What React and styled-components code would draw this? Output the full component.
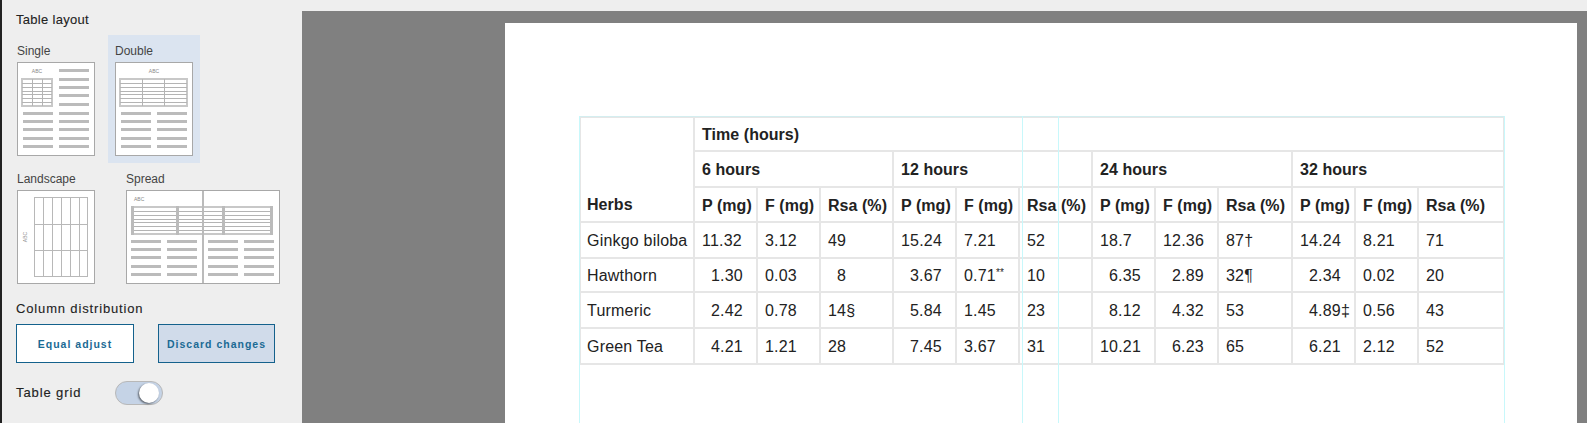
import React from "react";
import styled, { createGlobalStyle } from "styled-components";

const GlobalStyle = createGlobalStyle`
  html, body { margin: 0; padding: 0; background: #eeeeee; }
  * { box-sizing: border-box; }
`;

const Shell = styled.div`
  display: flex;
  height: 423px;
  overflow: hidden;
  font-family: "Liberation Sans", Arial, sans-serif;
`;

const Sidebar = styled.aside`
  flex: 0 0 302px;
  padding: 12px 0 0 8px;
  background: #eeeeee;
  border-left: 2px solid #222222;
`;

const Heading = styled.h3`
  margin: 0 0 0 6px;
  font-size: 13px;
  line-height: 16px;
  font-weight: 400;
  letter-spacing: ${(p) => p.$spacing}px;
  color: #222222;
  -webkit-text-stroke: 0.1px #222222;
`;

const LayoutRow = styled.div`
  display: flex;
  gap: ${(p) => p.$gap}px;
`;

const FirstRow = styled(LayoutRow)`
  margin-top: 7px;
`;

const Option = styled.div`
  width: ${(p) => (p.$wide ? 168 : 92)}px;
  height: 128px;
  padding: 8px 7px 0;
  background: ${(p) => (p.$active ? "#dbe4f0" : "transparent")};
`;

const OptionLabel = styled.div`
  height: 19px;
  font-size: 12px;
  line-height: 16px;
  color: #444444;
`;

const Thumb = styled.div`
  width: ${(p) => (p.$wide ? 154 : 78)}px;
  height: 94px;
  background: #ffffff;
  border: 1px solid #a8a8a8;

  svg {
    display: block;
    width: 100%;
    height: 100%;
  }

  text {
    font-family: "Liberation Sans", Arial, sans-serif;
    font-size: 5px;
    fill: #888888;
  }
`;

const ColumnHeading = styled(Heading)`
  margin-top: 10px;
`;

const ButtonRow = styled.div`
  display: flex;
  gap: 24px;
  margin: 7px 0 0 6px;
`;

const ActionButton = styled.button`
  width: ${(p) => (p.$wide ? 117 : 118)}px;
  height: 39px;
  padding: 0;
  font-family: inherit;
  font-size: 10.5px;
  font-weight: 700;
  letter-spacing: 1px;
  color: #1b6a94;
  background: ${(p) => (p.$tinted ? "#d0dbea" : "#ffffff")};
  border: 1px solid #14618c;
  border-radius: 0;
`;

const GridRow = styled.div`
  display: flex;
  align-items: center;
  margin: 18px 0 0 6px;
`;

const GridLabel = styled.span`
  width: 99px;
  padding-bottom: 2px;
  font-size: 13px;
  letter-spacing: 0.9px;
  color: #222222;
  -webkit-text-stroke: 0.15px #222222;
`;

const Toggle = styled.div`
  display: flex;
  justify-content: flex-end;
  align-items: center;
  width: 48px;
  height: 24px;
  padding-right: 3px;
  background: #c5d3e6;
  border: 1px solid #b8b8b8;
  border-radius: 12px;
`;

const Knob = styled.div`
  width: 20px;
  height: 20px;
  background: #ffffff;
  border-radius: 50%;
  box-shadow: -1px 1px 2px rgba(0, 0, 0, 0.55);
`;

const Workspace = styled.main`
  flex: 1;
  margin-top: 11px;
  padding: 12px 10px 0 203px;
  background: #808080;
`;

const Page = styled.div`
  height: 100%;
  padding: 93px 0 0 74px;
  background: #ffffff;
`;

const TableWrap = styled.div`
  position: relative;
  width: 926px;
`;

const Guide = styled.div`
  position: absolute;
  top: 0;
  left: ${(p) => p.$left}px;
  width: 1px;
  height: 320px;
  background: #c8f8fb;
`;

const TopGuide = styled.div`
  position: absolute;
  top: 0;
  left: 0;
  width: 926px;
  height: 1px;
  background: #d4eef0;
`;

const Table = styled.table`
  width: 926px;
  table-layout: fixed;
  border-collapse: collapse;
  font-size: 16px;
  letter-spacing: 0.2px;
  color: #222222;
`;

const HeadCell = styled.th`
  height: ${(p) => p.$h}px;
  padding: ${(p) => (p.$bottom ? "0 7px 7px 6px" : "2px 7px 0")};
  text-align: left;
  vertical-align: ${(p) => (p.$bottom ? "bottom" : "middle")};
  white-space: nowrap;
  font-weight: 700;
  letter-spacing: 0.05px;
  border: 2px solid #e6e6e6;
`;

const Cell = styled.td`
  height: ${(p) => p.$h}px;
  padding: 2px 0 0 ${(p) => p.$pad}px;
  white-space: nowrap;
  border: 2px solid #e6e6e6;
`;

const Note = styled.sup`
  font-size: 10px;
  line-height: 0;
  vertical-align: 5px;
`;

const COLS = [114, 63, 63, 73, 63, 63, 73, 63, 63, 74, 63, 63, 86];
const GUIDES = [0, 443, 479, 925];
const ROW_H = [36, 34, 36, 36];

// leading "_" = cell text pushed one digit to the right (decimal alignment)
const ROWS = [
  ["Ginkgo biloba", "11.32", "3.12", "49", "15.24", "7.21", "52", "18.7", "12.36", "87†", "14.24", "8.21", "71"],
  ["Hawthorn", "_1.30", "0.03", "_8", "_3.67", "0.71**", "10", "_6.35", "_2.89", "32¶", "_2.34", "0.02", "20"],
  ["Turmeric", "_2.42", "0.78", "14§", "_5.84", "1.45", "23", "_8.12", "_4.32", "53", "_4.89‡", "0.56", "43"],
  ["Green Tea", "_4.21", "1.21", "28", "_7.45", "3.67", "31", "10.21", "_6.23", "65", "_6.21", "2.12", "52"],
];

const UNITS = ["P (mg)", "F (mg)", "Rsa (%)"];

function Bars({ x, ys }) {
  return ys.map((y) => (
    <rect key={y} x={Math.round(x)} y={Math.round(y - 1.5)} width="30" height="3" fill="#bbbbbb" />
  ));
}

function MiniTable({ x, y, w, h, cols, rows = 7 }) {
  const lines = [];
  for (let i = 1; i < rows; i++) {
    const ly = Math.round(y + (h * i) / rows) + 0.5;
    lines.push(<line key={"r" + i} x1={x} x2={x + w} y1={ly} y2={ly} stroke="#b4b4b4" strokeWidth="1" />);
  }
  cols.forEach((c) => {
    lines.push(<line key={"c" + c} x1={c + 0.5} x2={c + 0.5} y1={y} y2={y + h} stroke="#b4b4b4" strokeWidth="1" />);
  });
  return (
    <g>
      <rect x={x} y={y} width={w} height={h} fill="#ffffff" stroke="#c8c8c8" strokeWidth="2" />
      {lines}
    </g>
  );
}

const LOWER = [50, 58.4, 66.7, 75, 83.4];

function SingleThumb() {
  return (
    <Thumb>
      <svg viewBox="0 0 76 92">
        <text x="19" y="10" textAnchor="middle">ABC</text>
        <MiniTable x={4} y={16} w={30} h={27} cols={[14, 24]} />
        <Bars x={40.7} ys={[7.7, 16, 24.3, 32.7, 41.3, ...LOWER]} />
        <Bars x={4.7} ys={LOWER} />
      </svg>
    </Thumb>
  );
}

function DoubleThumb() {
  return (
    <Thumb>
      <svg viewBox="0 0 76 92">
        <text x="38" y="10" textAnchor="middle">ABC</text>
        <MiniTable x={4} y={16} w={67} h={27} cols={[26, 48]} />
        <Bars x={4.7} ys={LOWER} />
        <Bars x={40.7} ys={LOWER} />
      </svg>
    </Thumb>
  );
}

function LandscapeThumb() {
  const xs = [16, 25, 34, 43, 52, 61, 69];
  const ys = [6, 33, 59, 85];
  return (
    <Thumb>
      <svg viewBox="0 0 76 92">
        <text x="9" y="46" textAnchor="middle" transform="rotate(-90 9 46)">ABC</text>
        {xs.map((x) => <line key={x} x1={x + 0.5} x2={x + 0.5} y1={6} y2={86} stroke="#b8b8b8" strokeWidth="1" />)}
        {ys.map((y) => <line key={y} x1={16} x2={70} y1={y + 0.5} y2={y + 0.5} stroke="#b8b8b8" strokeWidth="1" />)}
      </svg>
    </Thumb>
  );
}

function SpreadThumb() {
  return (
    <Thumb $wide>
      <svg viewBox="0 0 152 92">
        <text x="7" y="10">ABC</text>
        <MiniTable x={5} y={16} w={140} h={27} cols={[50, 96]} />
        <rect x={4} y={15} width="3" height="29" fill="#bbbbbb" />
        <rect x={49} y={15} width="3" height="29" fill="#bbbbbb" />
        <rect x={95} y={15} width="3" height="29" fill="#bbbbbb" />
        <rect x={143} y={15} width="3" height="29" fill="#bbbbbb" />
        <rect x={75} y={0} width="2" height="92" fill="#bbbbbb" />
        <Bars x={4.3} ys={LOWER} />
        <Bars x={40.3} ys={LOWER} />
        <Bars x={81} ys={LOWER} />
        <Bars x={117.3} ys={LOWER} />
      </svg>
    </Thumb>
  );
}

function renderValue(text) {
  if (text.endsWith("**")) {
    return (
      <>
        {text.slice(0, -2)}
        <Note>**</Note>
      </>
    );
  }
  return text;
}

function cellPadding(col, indent) {
  if (col === 0) return 6;
  return indent ? 16 : 7;
}

function DataTable() {
  return (
    <Table>
      <colgroup>
        {COLS.map((w, i) => <col key={i} style={{ width: w }} />)}
      </colgroup>
      <thead>
        <tr>
          <HeadCell rowSpan={3} $bottom>Herbs</HeadCell>
          <HeadCell colSpan={12} $h={34}>Time (hours)</HeadCell>
        </tr>
        <tr>
          {["6 hours", "12 hours", "24 hours", "32 hours"].map((t) => (
            <HeadCell key={t} colSpan={3} $h={36}>{t}</HeadCell>
          ))}
        </tr>
        <tr>
          {[0, 1, 2, 3].flatMap((g) =>
            UNITS.map((u) => <HeadCell key={g + u} $h={35}>{u}</HeadCell>)
          )}
        </tr>
      </thead>
      <tbody>
        {ROWS.map((row, r) => (
          <tr key={row[0]}>
            {row.map((v, i) => {
              const indent = v.startsWith("_");
              return (
                <Cell key={i} $h={ROW_H[r]} $pad={cellPadding(i, indent)}>
                  {renderValue(indent ? v.slice(1) : v)}
                </Cell>
              );
            })}
          </tr>
        ))}
      </tbody>
    </Table>
  );
}

export default function App() {
  return (
    <>
      <GlobalStyle />
      <Shell>
        <Sidebar>
          <Heading $spacing={0.3}>Table layout</Heading>
          <FirstRow $gap={6}>
            <Option>
              <OptionLabel>Single</OptionLabel>
              <SingleThumb />
            </Option>
            <Option $active>
              <OptionLabel>Double</OptionLabel>
              <DoubleThumb />
            </Option>
          </FirstRow>
          <LayoutRow $gap={17}>
            <Option>
              <OptionLabel>Landscape</OptionLabel>
              <LandscapeThumb />
            </Option>
            <Option $wide>
              <OptionLabel>Spread</OptionLabel>
              <SpreadThumb />
            </Option>
          </LayoutRow>
          <ColumnHeading $spacing={0.85}>Column distribution</ColumnHeading>
          <ButtonRow>
            <ActionButton>Equal adjust</ActionButton>
            <ActionButton $wide $tinted>Discard changes</ActionButton>
          </ButtonRow>
          <GridRow>
            <GridLabel>Table grid</GridLabel>
            <Toggle>
              <Knob />
            </Toggle>
          </GridRow>
        </Sidebar>
        <Workspace>
          <Page>
            <TableWrap>
              <DataTable />
              <TopGuide />
              {GUIDES.map((x) => <Guide key={x} $left={x} />)}
            </TableWrap>
          </Page>
        </Workspace>
      </Shell>
    </>
  );
}
